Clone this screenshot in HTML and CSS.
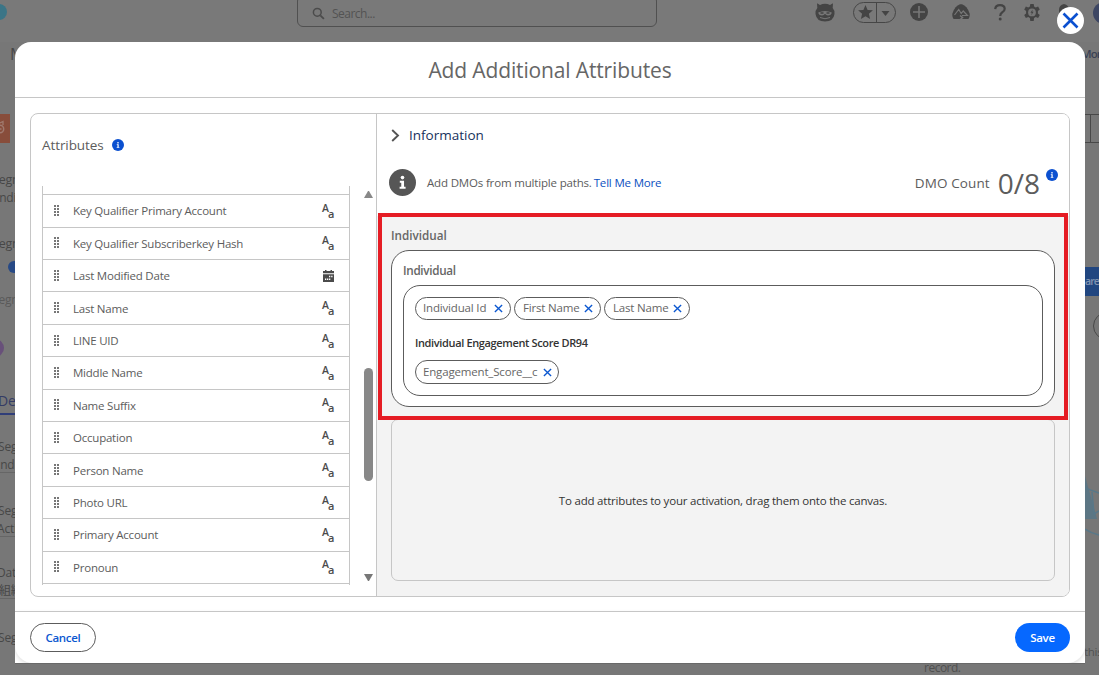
FILE: index.html
```
<!DOCTYPE html>
<html lang="en">
<head>
<meta charset="utf-8">
<title>Add Additional Attributes</title>
<link rel="stylesheet" href="styles.css">
</head>
<body>
<svg width="0" height="0" class="defs">
  <symbol id="x" viewBox="0 0 10 10"><path d="M1 1 9 9M9 1 1 9" fill="none" stroke="#0b57d0" stroke-width="1.5"/></symbol>
  <symbol id="info" viewBox="0 0 28 28"><circle cx="14" cy="14" r="14"/><circle cx="14" cy="8.9" r="1.9" fill="#fff"/><path d="M11.2 12.3h4.400v6.200h1.600v1.900h-6.200v-1.900h1.700v-4.300h-1.500z" fill="#fff"/></symbol>
  <symbol id="grip" viewBox="0 0 5 11"><path d="M1 0v11M4 0v11" stroke="#777" stroke-width="2" stroke-dasharray="2 1" fill="none"/></symbol>
</svg>
<div class="page">
  <div class="topbar">
    <i class="cloud"></i>
    <div class="search"><svg width="13" height="13" viewBox="0 0 13 13"><circle cx="5.300" cy="5.300" r="3.900" fill="none" stroke="#4b4b4b" stroke-width="1.500"/><path d="m8.300 8.300 3.600 3.600" stroke="#4b4b4b" stroke-width="1.800"/></svg><span>Search...</span></div>
    <div class="tools">
      <svg width="20" height="20" viewBox="0 0 20 20"><path d="M2 1.200 5 3Q10 .7 15 3L18 1.200 17.700 6Q19.700 8 19.500 12 18.500 19.500 10 19.500T.5 12Q.3 8 2.300 6z" fill="#444"/><path d="M3.200 10.500q6.800-3 13.600 0-.5 3-3.800 3-2 0-3-1.700-1 1.700-3 1.700-3.300 0-3.800-3z" fill="#777"/><path d="M5 15.500q5 2.500 10 0" stroke="#777" fill="none"/><path d="M5.500 11h3M11.500 11h3" stroke="#444" stroke-width="1.500"/></svg>
      <div class="fav"><svg width="43" height="21" viewBox="0 0 43 21"><rect x=".5" y=".5" width="42" height="20" rx="10" fill="none" stroke="#464646"/><path d="M23.500 0v21" stroke="#464646"/><path d="m12.500 3 2.100 4.900 5.300.4-4 3.500 1.200 5.200-4.600-2.800-4.600 2.800 1.200-5.200-4-3.500 5.300-.4z" fill="#444"/><path d="M28.500 9h8l-4 5z" fill="#444"/></svg></div>
      <svg class="t-plus" width="18" height="18" viewBox="0 0 18 18"><circle cx="9" cy="9" r="9" fill="#444"/><path d="M9 3v12M3 9h12" stroke="#777" stroke-width="1.600"/></svg>
      <svg class="t-trail" width="18" height="17" viewBox="0 0 18 17"><path d="M8 .3h2q5 1.500 7.500 9 .8 3-1 5.700H1.500Q-.3 12.300.5 9.300 3 1.800 8 .3z" fill="#444"/><path d="m2.500 11 4.200-5.500 2.500 4L11.200 7l4.300 4.500H10" fill="none" stroke="#777" stroke-width="1.200"/><path d="m7 16.500 3.500-3-2.500-2" fill="none" stroke="#777" stroke-width="1.500"/></svg>
      <svg class="t-help" width="12" height="17" viewBox="0 0 12 17"><path d="M1.200 5.200Q1.500 1.200 6 1.200t4.700 3.600Q10.700 7 8.300 8.300 6.200 9.500 6.200 12" fill="none" stroke="#444" stroke-width="2.200"/><circle cx="6.200" cy="15" r="1.500" fill="#444"/></svg>
      <svg class="t-gear" width="16" height="17" viewBox="0 0 16 17"><path d="M6.300 0h3.400l.4 2.400 1.700 1 2.300-.9 1.700 2.900-1.900 1.600v2.500l1.900 1.600-1.700 2.900-2.300-.9-1.700 1-.4 2.900H6.300l-.4-2.900-1.700-1-2.300.9L.2 11.100l1.900-1.600V7L.2 5.400l1.700-2.900 2.300.9 1.700-1z" fill="#444"/><circle cx="8" cy="8.400" r="3.900" fill="#777"/><path d="m8.600 5.500-2.100 3.200h1.300l-.5 2.600 2.300-3.500H8.200z" fill="#444"/></svg>
      <svg class="t-bell" width="12" height="18" viewBox="0 0 12 18"><path d="M6 0q5 1 5 6v6H1V6q0-5 5-6z" fill="#444"/></svg>
      <i class="avatar"></i>
    </div>
  </div>
  <div class="rail left">
    <span class="app">M</span><span class="orange"><svg width="12" height="18" viewBox="0 0 12 18"><circle cx="0" cy="11" r="3.700" fill="none" stroke="#a07a6f" stroke-width="1.500"/><path d="m0 5 3-1.500V7M0 11h1.500" stroke="#a07a6f" fill="none" stroke-width="1.300"/></svg></span>
    <span class="l1">Segm</span><span class="l2">Indivic</span><span class="l3">Segm</span><i class="dot"></i><span class="l4">Segm</span><i class="purple"></i>
    <span class="tab">De</span><span class="f1">Seg</span><span class="f2">Indi</span><span class="f3">Seg</span><span class="f4">Acti</span><span class="f5">Dat</span><span class="f6">組織</span><span class="f7">Seg</span>
  </div>
  <div class="rail right">
    <span class="more">Mor</span><i class="btns"></i><span class="share">are</span><i class="round"></i>
    <svg class="art" width="14" height="66" viewBox="0 0 14 66"><path d="M0 0 12 43H0z" fill="#5c7684"/><path d="M0 12 14 17M7 16l2 22 5-3M0 53q6 4 14 6" stroke="#587889" stroke-width="1.500" fill="none"/></svg><span class="this">this</span>
  </div>
  <div class="under">record.</div>
</div>

<div class="modal">
  <header><h1>Add Additional Attributes</h1></header>
  <main>
    <section class="panel">
      <aside>
        <h2><span>Attributes</span><svg width="12" height="12" fill="#0b50d0"><use href="#info"/></svg></h2>
        <div class="scroller">
          <ul id="list"></ul>
          <div class="bar"><i class="up"></i><i class="thumb"></i><i class="down"></i></div>
        </div>
      </aside>
      <article>
        <div class="intro">
          <div class="disclosure"><svg width="9" height="13" viewBox="0 0 9 13"><path d="m1.200 1 5.800 5.500L1.200 12" fill="none" stroke="#555" stroke-width="1.900"/></svg><span>Information</span></div>
          <div class="notice">
            <svg width="27" height="27" fill="#565656"><use href="#info"/></svg>
            <p>Add DMOs from multiple paths.</p><a>Tell Me More</a>
            <div class="count"><span class="lbl">DMO Count</span><span class="num">0/8</span><svg width="12" height="12" fill="#0b50d0"><use href="#info"/></svg></div>
          </div>
        </div>
        <div class="canvas">
          <h3>Individual</h3>
          <div class="outer">
            <h4>Individual</h4>
            <div class="inner">
              <div class="chips">
                <span class="chip w1"><b>Individual Id</b><svg width="9" height="9"><use href="#x"/></svg></span>
                <span class="chip w2"><b>First Name</b><svg width="9" height="9"><use href="#x"/></svg></span>
                <span class="chip w3"><b>Last Name</b><svg width="9" height="9"><use href="#x"/></svg></span>
              </div>
              <h5>Individual Engagement Score DR94</h5>
              <div class="chips"><span class="chip w4"><b>Engagement_Score__c</b><svg width="9" height="9"><use href="#x"/></svg></span></div>
            </div>
          </div>
          <div class="drop"><span>To add attributes to your activation, drag them onto the canvas.</span></div>
        </div>
        <i class="highlight"></i>
      </article>
    </section>
  </main>
  <footer><button class="cancel">Cancel</button><button class="save">Save</button></footer>
</div>
<div class="close"><svg width="17" height="17" viewBox="0 0 17 17"><path d="m1.500 1.500 14 14M15.500 1.500l-14 14" stroke="#0b50d0" stroke-width="2.600"/></svg></div>
<script src="list.js"></script>
</body>
</html>
```
FILE: styles.css
```
* { box-sizing: border-box; }
body { margin: 0; width: 1099px; height: 675px; overflow: hidden; position: relative; font-family: "Open Sans", "Noto Sans CJK JP", sans-serif; font-size: 11.5px; color: #5c5c5c; background: #777; }
h1, h2, h3, h4, h5, p, ul { margin: 0; padding: 0; font-weight: 400; }
svg { display: block; flex: none; }
i { display: block; flex: none; }
.defs { position: absolute; }

/* dimmed page behind the dialog */
.page { width: 1099px; height: 675px; display: grid; grid-template: 42px 621px 12px / 15px 1fr 14px; overflow: hidden; color: #474747; white-space: nowrap; background: #777; }
.topbar { grid-column: 1 / 4; display: flex; align-items: flex-start; background: #797979; overflow: hidden; }
.cloud { width: 18px; height: 16px; border-radius: 8px; background: #3b7587; margin: 4px 0 0 -11px; }
.search { flex: none; width: 360px; height: 32px; margin: -5px 0 0 290px; border: 1px solid #505050; border-radius: 6px; display: flex; align-items: center; padding: 4px 0 0 14px; gap: 7px; font-size: 12px; letter-spacing: -.52px; color: #535353; }
.tools { flex: none; display: flex; align-items: flex-start; margin: 2px 0 0 158px; }
.fav { margin-left: 18px; }
.t-plus { margin: 1px 0 0 14px; }
.t-trail { margin: 2px 0 0 24px; }
.t-help { margin: 2px 0 0 24px; }
.t-gear { margin: 2px 0 0 18px; }
.t-bell { margin: 2px 0 0 18px; }
.avatar { width: 22px; height: 22px; border-radius: 50%; background: #3d4663; margin-left: 23px; }
.rail { overflow: hidden; display: flex; flex-direction: column; align-items: flex-start; font-size: 12px; letter-spacing: -.2px; }
.rail > * { flex: none; line-height: 16px; height: 16px; }
.left { grid-column: 1; }
.app { font-size: 16px; margin: 4px 0 0 10px; }
.left .orange { width: 10px; height: 29px; background: #884d3b; margin-top: 52px; padding-top: 4px; overflow: hidden; }
.l1 { margin: 29px 0 0 -8px; }
.l2 { margin: 2px 0 0 -4px; }
.l3 { margin: 30px 0 0 -8px; }
.l1, .l3 { font-size: 12.5px; }
.left .dot { width: 12px; height: 12px; margin: 9px 0 0 8px; border-radius: 50%; background: #274985; }
.l4 { margin: 19px 0 0 -8px; color: #5a5a5a; }
.left .purple { width: 18px; height: 18px; margin: 31px 0 0 -14px; border-radius: 50%; background: #68507a; }
.left .tab { width: 17px; height: 22px; margin: 36px 0 0 -2px; border-bottom: 2px solid #303e79; color: #343c65; font-size: 14px; }
.f1 { margin: 24px 0 0 -2px; }
.f2 { margin: 2px 0 0 -3px; border-bottom: 1px solid #666; }
.f3 { margin: 30px 0 0 -2px; }
.f4 { margin: 2px 0 0 -3px; border-bottom: 1px solid #666; }
.f5 { margin: 28px 0 0 -3px; }
.f6 { margin: 2px 0 0 -1px; border-bottom: 1px solid #666; }
.f7 { margin: 31px 0 0 -2px; }
.right { grid-column: 3; }
.more { margin: 4px 0 0 -4px; font-size: 11.5px; font-weight: 600; letter-spacing: -.9px; color: #3a4255; }
.right .btns { width: 16px; height: 29px; margin-top: 52px; border: 1px solid #484848; box-shadow: inset 5px 0 #777, inset 6px 0 #484848; border-left: 0; }
.right .share { width: 14px; height: 29px; line-height: 29px; margin-top: 124px; background: #214680; color: #8294b0; font-size: 10.5px; font-weight: 600; letter-spacing: -.9px; }
.right .round { width: 28px; height: 28px; margin: 16px 0 0 8px; border: 1px solid #484848; border-radius: 50%; }
.right .art { height: 66px; margin-top: 136px; }
.this { margin: 102px 0 0 -1px; font-size: 11.5px; letter-spacing: -.3px; color: #505050; }
.under { grid-column: 2; grid-row: 3; border-top: 1px solid #696969; padding-left: 909px; line-height: 8px; font-size: 12px; letter-spacing: -.5px; color: #505050; }

.modal { position: absolute; left: 15px; top: 42px; width: 1070px; height: 621px; display: flex; flex-direction: column; background: #fff; border-radius: 16px 16px 0 0; overflow: hidden; }
header { height: 56px; border-bottom: 1px solid #c6c6c6; display: flex; justify-content: center; align-items: center; }
h1 { font-size: 21px; line-height: 28px; letter-spacing: -.14px; color: #666; }
main { flex: 1; padding: 15px 15px 14px; }
.panel { height: 484px; display: flex; border: 1px solid #c6c6c6; border-radius: 8px; overflow: hidden; }
aside { width: 346px; border-right: 1px solid #c6c6c6; padding: 20px 3px 0 11px; }
h2 { display: flex; align-items: center; height: 22px; font-size: 13.5px; letter-spacing: -.08px; gap: 8px; }
h2 svg { margin-bottom: 1px; }
.scroller { display: flex; justify-content: space-between; height: 399px; margin-top: 30px; }
ul { width: 308px; height: 399px; list-style: none; overflow: hidden; border: 0 solid #c6c6c6; border-width: 0 1px; padding-top: 8.3px; }
li { height: 32.4px; border-top: 1px solid #c6c6c6; display: flex; align-items: center; padding: 0 15px 0 11px; }
li .grip { width: 5px; height: 11px; margin-bottom: 1px; }
li .name { flex: 1; padding-left: 14px; letter-spacing: -.22px; }
.type { width: 12px; height: 16px; display: flex; color: #4b4b4b; line-height: 11px; }
.type b { font-size: 10.5px; font-weight: 600; }
.type em { font-size: 11px; font-style: normal; font-weight: 600; padding-top: 5px; margin-left: -1px; }
.bar { width: 9px; display: flex; flex-direction: column; }
.up { border: solid transparent; border-width: 0 4.5px 7px; border-bottom-color: #888; margin-top: 5px; }
.thumb { height: 113px; border-radius: 5px; background: #888; margin-top: 170px; }
.down { border: solid transparent; border-width: 7px 4.5px 0; border-top-color: #777; margin-top: 93px; }

article { flex: 1; display: flex; flex-direction: column; position: relative; background: #f3f3f3; }
.intro { height: 102px; background: #fff; padding: 10px 13px 0 12px; }
.disclosure { display: flex; align-items: center; height: 22px; padding-left: 2px; gap: 9px; font-size: 13.5px; color: #17325c; }
.notice { display: flex; align-items: center; height: 30px; margin-top: 21px; }
.notice p { margin-left: 11px; letter-spacing: -.17px; }
.notice a { margin-left: 2px; color: #0b50c0; letter-spacing: -.18px; }
.count { margin-left: auto; display: flex; align-items: center; margin-right: -2px; }
.lbl { font-size: 13.5px; letter-spacing: .1px; padding-top: 1px; }
.num { font-size: 28px; line-height: 30px; margin: 2px 6px 0 8px; }
.count svg { margin-bottom: 14px; }
.canvas { flex: 1; padding: 10px 14px 15px; display: flex; flex-direction: column; }
h3, h4 { font-size: 11.7px; line-height: 18px; font-weight: 600; color: #666; }
h3 { height: 24px; }
.outer { height: 157px; border: 1px solid #5c5c5c; border-radius: 18px; background: #fff; padding: 10px 11px; }
h4 { height: 24px; letter-spacing: -.3px; }
.inner { height: 111px; border: 1px solid #5c5c5c; border-radius: 17px; padding: 11px; }
.chips { display: flex; gap: 3px; }
.chip { height: 23px; border: 1px solid #5c5c5c; border-radius: 12px; display: flex; align-items: center; justify-content: space-between; padding: 0 7px; white-space: nowrap; }
.chip b { font-weight: 400; color: #666; letter-spacing: -.17px; margin-top: -2px; }
.w1 { width: 96px; } .w2 { width: 87px; } .w3 { width: 86px; } .w4 { width: 144px; height: 24px; }
.w2, .w3 { padding-left: 8px; }
.w4 { padding-right: 6px; }
.w4 b { margin-top: -1px; }
h5 { font-size: 11px; line-height: 16px; margin: 15px 0 9px; font-weight: 600; letter-spacing: -.36px; color: #333; }
.drop { flex: 1; margin-top: 12px; border: 1px solid #c6c6c6; border-radius: 7px; display: flex; align-items: center; justify-content: center; color: #333; letter-spacing: -.2px; }
.highlight { position: absolute; left: 1px; top: 99px; width: 690px; height: 207px; border: 4px solid #e51c24; }
footer { height: 52px; border-top: 1px solid #c6c6c6; padding: 11px 15px; display: flex; justify-content: space-between; border-radius: 0 0 18px 18px; box-shadow: 0 2px 4px rgba(0,0,0,.12); }
button { height: 29px; border-radius: 15px; font: 600 11.5px "Open Sans", sans-serif; letter-spacing: -.3px; padding: 0; }
.cancel { width: 66px; border: 1px solid #5c5c5c; background: #fff; color: #0b57d0; }
.save { width: 55px; border: 0; background: #0668ff; color: #fff; }
.close { position: absolute; left: 1057px; top: 7px; width: 27px; height: 27px; border-radius: 50%; background: #fff; display: flex; align-items: center; justify-content: center; }
```
FILE: list.js
```
const names = ["Key Qualifier Primary Account", "Key Qualifier Subscriberkey Hash", "Last Modified Date", "Last Name", "LINE UID", "Middle Name", "Name Suffix", "Occupation", "Person Name", "Photo URL", "Primary Account", "Pronoun", ""];
const calendar = '<svg width="11" height="12" viewBox="0 0 11 12"><path d="M0 1h2V0h1.500v1h4V0H9v1h2v2.300H0zM0 4.300h11V12H0z" fill="#4b4b4b"/><path d="M6 6.500h1.300M8.200 6.500h1.300M2 9.300h1.300M4 9.300h1.300M6 9.300h1.300" stroke="#fff" stroke-width="1.400"/></svg>';
const textType = '<span class="type"><b>A</b><em>a</em></span>';
document.getElementById("list").innerHTML = names.map(n =>
  n ? '<li><svg class="grip"><use href="#grip"/></svg><span class="name">' + n + '</span>' + (n === "Last Modified Date" ? calendar : textType) + '</li>' : '<li></li>'
).join("");
```
